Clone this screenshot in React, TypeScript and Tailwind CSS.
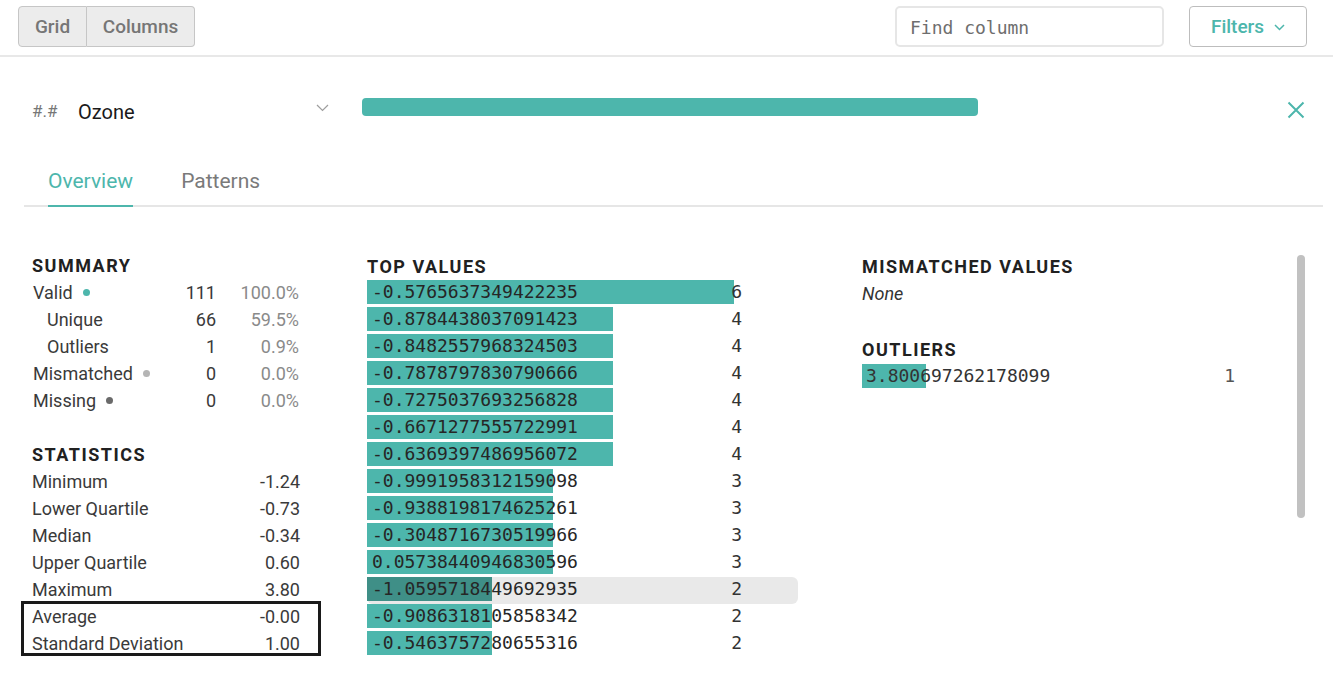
import React from "react";

const TEAL = "#4db6ac";

const topValues: { v: string; c: number; w: number; hl?: boolean }[] = [
  { v: "-0.5765637349422235", c: 6, w: 367 },
  { v: "-0.8784438037091423", c: 4, w: 246 },
  { v: "-0.8482557968324503", c: 4, w: 246 },
  { v: "-0.7878797830790666", c: 4, w: 246 },
  { v: "-0.7275037693256828", c: 4, w: 246 },
  { v: "-0.6671277555722991", c: 4, w: 246 },
  { v: "-0.6369397486956072", c: 4, w: 246 },
  { v: "-0.9991958312159098", c: 3, w: 186 },
  { v: "-0.9388198174625261", c: 3, w: 186 },
  { v: "-0.3048716730519966", c: 3, w: 186 },
  { v: "0.05738440946830596", c: 3, w: 186 },
  { v: "-1.0595718449692935", c: 2, w: 125, hl: true },
  { v: "-0.9086318105858342", c: 2, w: 125 },
  { v: "-0.5463757280655316", c: 2, w: 125 },
];

const mono = { fontFamily: '"DejaVu Sans Mono", "Liberation Mono", monospace' };

function Heading({ children }: { children: React.ReactNode }) {
  return (
    <div className="h-[27px] flex items-center text-[18px] font-bold tracking-[1.5px] text-[#212121]">
      {children}
    </div>
  );
}

function SumRow({
  label,
  n,
  p,
  indent,
  dot,
}: {
  label: string;
  n: string;
  p: string;
  indent?: boolean;
  dot?: string;
}) {
  return (
    <div className="h-[27px] flex items-center text-[18px] text-[#3a3a3a]">
      <div className={`flex items-center w-[150px] ${indent ? "pl-[15px]" : "pl-[1px]"}`}>
        <span>{label}</span>
        {dot && <span className={`ml-[10px] w-[7px] h-[7px] rounded-full ${dot}`} />}
      </div>
      <div className="w-[34px] text-right">{n}</div>
      <div className="w-[83px] text-right text-[#8a8a8a]">{p}</div>
    </div>
  );
}

function StatRow({ label, v }: { label: string; v: string }) {
  return (
    <div className="h-[27px] flex items-center justify-between text-[18px] text-[#3a3a3a]">
      <span>{label}</span>
      <span>{v}</span>
    </div>
  );
}

function ValueRow({ v, c, w, hl }: { v: string; c: number; w: number; hl?: boolean }) {
  return (
    <div
      className={`relative h-[27px] w-full flex items-start ${hl ? "bg-[#e9e9e9] rounded-[6px]" : ""}`}
    >
      <div
        className={`absolute left-0 top-0 h-[24px] ${hl ? "bg-[#3f8f87]" : "bg-[#4db6ac]"}`}
        style={{ width: w }}
      />
      <div
        className="relative h-[24px] flex items-center pl-[5px] text-[18px] text-[#262626] flex-1"
        style={mono}
      >
        {v}
      </div>
      <div
        className="relative h-[24px] flex items-center justify-end w-[100px] pr-[56px] text-[18px] text-[#333]"
        style={mono}
      >
        {c}
      </div>
    </div>
  );
}

export default function App() {
  return (
    <div
      className="w-[1333px] h-[683px] overflow-hidden bg-white text-[#212121]"
      style={{ fontFamily: 'Roboto, "Noto Sans", sans-serif' }}
    >
      {/* top bar */}
      <div className="h-[57px] border-b-2 border-[#e8e8e8] flex items-start pt-[6px] px-[18px]">
        <div className="flex">
          <button className="h-[41px] w-[69px] pt-[2px] bg-[#ececec] border border-[#c6c6c6] rounded-l-[4px] text-[19px] font-medium text-[#767676]">
            Grid
          </button>
          <button className="h-[41px] w-[108px] pt-[2px] bg-[#ececec] border border-l-0 border-[#c6c6c6] rounded-r-[4px] text-[19px] font-medium text-[#767676]">
            Columns
          </button>
        </div>
        <div className="ml-auto flex items-start">
          <div
            className="h-[41px] w-[269px] pt-[1px] border-2 border-[#e6e6e6] rounded-[5px] flex items-center pl-[13px] text-[18px] text-[#6e6e6e]"
            style={mono}
          >
            Find column
          </div>
          <button className="ml-[25px] mr-[8px] h-[41px] w-[118px] pt-[2px] border border-[#bdbdbd] rounded-[4px] flex items-center justify-center gap-[10px] text-[19px] font-medium text-[#4db6ac]">
            Filters
            <svg width="11" height="7" viewBox="0 0 11 7" fill="none">
              <path d="M1 1l4.5 4.5L10 1" stroke={TEAL} strokeWidth="1.5" />
            </svg>
          </button>
        </div>
      </div>

      {/* column row */}
      <div className="mt-[35px] h-[36px] flex items-center pl-[32px] pr-[28px]">
        <span className="text-[17px] text-[#777] w-[46px] mt-[4px]">#.#</span>
        <span className="text-[20px] text-[#1a1a1a] mt-[4px]">Ozone</span>
        <svg className="ml-[181px] -mt-[4px]" width="13" height="8" viewBox="0 0 13 8" fill="none">
          <path d="M1 1l5.5 5.5L12 1" stroke="#9e9e9e" strokeWidth="1.2" />
        </svg>
        <div className="ml-[33px] h-[18px] w-[616px] rounded-[4px] bg-[#4db6ac] -mt-[6px]" />
        <svg className="ml-auto" width="18" height="18" viewBox="0 0 18 18" fill="none">
          <path d="M1.5 1.5l15 15M16.5 1.5l-15 15" stroke={TEAL} strokeWidth="2" />
        </svg>
      </div>

      {/* tabs */}
      <div className="mt-[38px] ml-[24px] mr-[10px] border-b-2 border-[#e6e6e6] flex pl-[24px] gap-[48px]">
        <div className="pb-[7px] border-b-2 border-[#4db6ac] -mb-[2px] text-[21px] text-[#4db6ac]">
          Overview
        </div>
        <div className="pb-[7px] text-[21px] text-[#7a7a7a]">Patterns</div>
      </div>

      {/* content */}
      <div className="flex pt-[46px] pl-[32px]">
        {/* left */}
        <div className="w-[268px] flex flex-col -mt-[1px]">
          <Heading>SUMMARY</Heading>
          <SumRow label="Valid" n="111" p="100.0%" dot="bg-[#4db6ac]" />
          <SumRow label="Unique" n="66" p="59.5%" indent />
          <SumRow label="Outliers" n="1" p="0.9%" indent />
          <SumRow label="Mismatched" n="0" p="0.0%" dot="bg-[#b5b5b5]" />
          <SumRow label="Missing" n="0" p="0.0%" dot="bg-[#6a6a6a]" />
          <div className="h-[27px]" />
          <Heading>STATISTICS</Heading>
          <StatRow label="Minimum" v="-1.24" />
          <StatRow label="Lower Quartile" v="-0.73" />
          <StatRow label="Median" v="-0.34" />
          <StatRow label="Upper Quartile" v="0.60" />
          <StatRow label="Maximum" v="3.80" />
          <div className="-ml-[11px] -mr-[21px] -mt-[2px] h-[55px] border-[3px] border-[#1a1a1a] pl-[8px] pr-[18px]">
            <div className="-mt-[1px]">
              <StatRow label="Average" v="-0.00" />
              <StatRow label="Standard Deviation" v="1.00" />
            </div>
          </div>
        </div>

        {/* middle */}
        <div className="ml-[67px] w-[431px] flex flex-col">
          <Heading>TOP VALUES</Heading>
          {topValues.map((r, i) => (
            <ValueRow key={i} {...r} />
          ))}
        </div>

        {/* right */}
        <div className="ml-[64px] w-[378px] flex flex-col">
          <Heading>MISMATCHED VALUES</Heading>
          <div className="h-[27px] flex items-center text-[18px] italic text-[#333]">None</div>
          <div className="h-[29px]" />
          <Heading>OUTLIERS</Heading>
          <div className="relative h-[27px] flex items-start mt-[1px]">
            <div className="absolute left-0 top-0 h-[24px] w-[64px] bg-[#4db6ac]" />
            <div
              className="relative h-[24px] flex items-center pl-[4px] text-[18px] text-[#333] flex-1"
              style={mono}
            >
              3.800697262178099
            </div>
            <div
              className="relative h-[24px] flex items-center justify-end w-[60px] pr-[5px] text-[18px] text-[#555]"
              style={mono}
            >
              1
            </div>
          </div>
        </div>

        {/* scrollbar */}
        <div className="ml-auto mr-[28px] mt-[2px] w-[8px] h-[263px] rounded-full bg-[#c1c1c1]" />
      </div>
    </div>
  );
}
